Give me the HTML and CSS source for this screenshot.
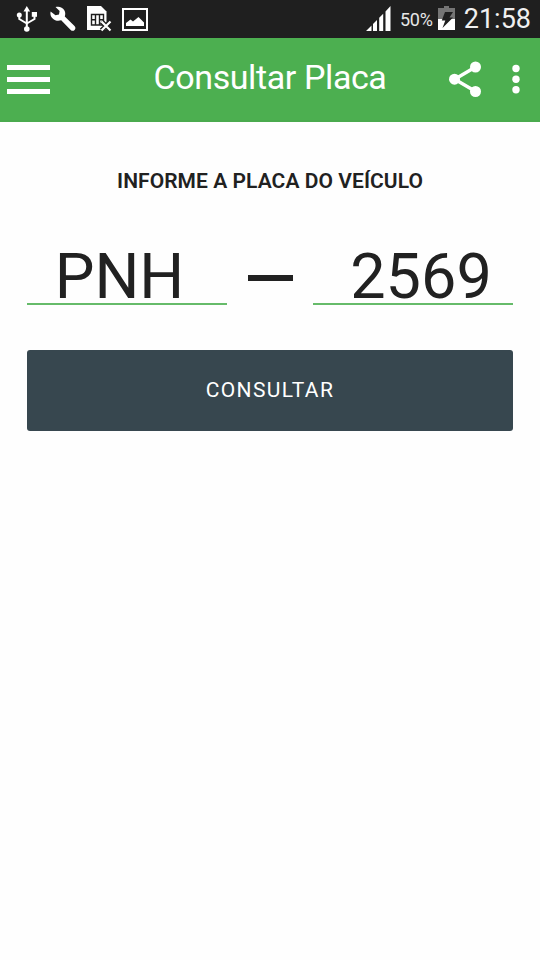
FILE: index.html
```html
<!DOCTYPE html>
<html lang="pt-BR">
<head>
    <meta charset="UTF-8">
    <meta name="viewport" content="width=device-width, initial-scale=1.0">
    <title>Consultar Placa</title>
    <link rel="stylesheet" href="styles.css">
</head>
<body>

<div class="status-bar">
    <div class="notifications">
        <svg class="usb" width="22" height="28" viewBox="0 0 22 28" fill="none" stroke="#fff" stroke-width="2">
            <path d="M10.800 4V24M3.300 10v4l7.500 4.500M18.500 9v5l-7.700 4.500"/>
            <path d="M10.800 1l3.300 5.500H7.500z" fill="#fff" stroke="none"/>
            <circle cx="10.800" cy="24" r="2.800" fill="#fff" stroke="none"/>
            <circle cx="3.300" cy="10" r="2.500" fill="#fff" stroke="none"/>
            <path d="M15.800 7h5.200v4.800h-5.200z" fill="#fff" stroke="none"/>
        </svg>
        <svg class="wrench" width="26" height="26" viewBox="0 0 26 26">
            <path d="M5.500 1C9 0 12.500 1 14.300 4.200c1.200 2 1.200 3.800.5 6.300L24.500 20c1.200 1.300 1.200 2.700.1 3.900-1.200 1.200-2.700 1.200-3.900 0L11.200 14.300C8 15.300 5 14.800 2.700 12.500.6 10.500 0 8 .6 5.500L5.500 9.300 9 8.500 9.600 5z" fill="#fff"/>
        </svg>
        <svg class="sim" width="26" height="28" viewBox="0 0 26 28">
            <path d="M0 1h14l5.500 5.500V25H0z" fill="#fff"/>
            <path d="M4.500 9.500h12v10.500h-12zM8.500 9.500V20M12.500 9.500V20M4.500 14.700h4M12.500 14.700h4" fill="none" stroke="#1f1f1f" stroke-width="1.400"/>
            <path d="M14.500 16.500l9 9M23.500 16.500l-9 9" fill="none" stroke="#1f1f1f" stroke-width="4.800"/>
            <path d="M14.500 16.500l9 9M23.500 16.500l-9 9" fill="none" stroke="#fff" stroke-width="2.200"/>
        </svg>
        <svg class="picture" width="26" height="23" viewBox="0 0 26 23">
            <path d="M1 1h24v21H1z" fill="none" stroke="#fff" stroke-width="2"/>
            <path d="M4 18v-3l4.500-3.500 2.500 2 5.500-4.500 5.500 5.500V18z" fill="#fff"/>
        </svg>
    </div>
    <div class="system">
        <svg class="signal" width="25" height="25" viewBox="0 0 25 25">
            <path d="M0 25l5.500-5.500V25zM7 18l4-4v11H7zM13.200 11.800l4-4V25h-4zM19.500 5.500L24.500 0v25h-5z" fill="#fff"/>
        </svg>
        <span class="percent">50%</span>
        <svg class="battery" width="17" height="24" viewBox="0 0 17 24">
            <path d="M6 0h5v2h6v11H0V2h6z" fill="#757575"/>
            <path d="M0 13h17v11H0z" fill="#fff"/>
            <path d="M7 6h8l-3.500 5.500H15L4.500 22l2.800-7.500H3.800z" fill="#1f1f1f"/>
        </svg>
        <span class="clock">21:58</span>
    </div>
</div>

<header>
    <button class="menu" aria-label="Menu">
        <span></span>
        <span></span>
        <span></span>
    </button>
    <h1>Consultar Placa</h1>
    <button class="share" aria-label="Compartilhar">
        <svg width="34" height="36" viewBox="0 0 34 36" fill="#fff">
            <path d="M26.500 6L5.700 18.200l21 12.300" fill="none" stroke="#fff" stroke-width="3.400"/>
            <circle cx="26.500" cy="6" r="5.500"/>
            <circle cx="5.500" cy="18.200" r="5.500"/>
            <circle cx="26.500" cy="30.500" r="5.500"/>
        </svg>
    </button>
    <button class="more" aria-label="Mais">
        <svg width="8" height="30" viewBox="0 0 8 30" fill="#fff">
            <circle cx="4" cy="4.500" r="3.700"/>
            <circle cx="4" cy="15.200" r="3.700"/>
            <circle cx="4" cy="25.700" r="3.700"/>
        </svg>
    </button>
</header>

<main>
    <h2>INFORME A PLACA DO VEÍCULO</h2>
    <form>
        <div class="plate">
            <input class="letters" type="text" value="PNH" maxlength="3" aria-label="Letras">
            <span class="dash"></span>
            <input class="numbers" type="text" value="2569" maxlength="4" aria-label="Números">
        </div>
        <button class="submit" type="button">CONSULTAR</button>
    </form>
</main>

</body>
</html>
```
FILE: styles.css
```css
* {
    box-sizing: border-box;
}
body {
    font-family: Roboto, 'Liberation Sans', sans-serif;
    margin: 0;
    padding: 0;
    min-height: 960px;
    background-color: #fefefe;
    color: #212121;
}
button {
    border: none;
    padding: 0;
    background: none;
    font-family: inherit;
    cursor: pointer;
}
svg {
    display: block;
    flex: none;
}

/* Status bar */
.status-bar {
    display: flex;
    justify-content: space-between;
    height: 38px;
    padding: 0 9px 0 16px;
    background-color: #1f1f1f;
    color: #fff;
}
.notifications, .system {
    display: flex;
    align-items: flex-start;
}
.usb {
    margin-top: 5px;
}
.wrench {
    margin: 6px 0 0 12px;
}
.sim {
    margin: 5px 0 0 11px;
}
.picture {
    margin: 8px 0 0 9px;
}
.signal {
    margin-top: 6px;
}
.percent {
    margin: 9px 0 0 9px;
    font-size: 18px;
    line-height: 22px;
    letter-spacing: -0.2px;
    color: #e6e6e6;
}
.battery {
    margin: 6px 0 0 5px;
}
.clock {
    margin: 3px 0 0 9px;
    font-size: 27px;
    line-height: 32px;
    color: #f0f0f0;
}

/* Toolbar */
header {
    display: flex;
    align-items: center;
    height: 84px;
    padding: 0 20px 0 7px;
    background-color: #4caf50;
    border-bottom: 2px solid #4aaa4e;
    color: #fff;
}
.menu {
    display: flex;
    flex-direction: column;
    gap: 7px;
    width: 43px;
}
.menu span {
    height: 5px;
    background-color: #fff;
}
h1 {
    flex: 1;
    margin: 0 0 4px;
    padding-left: 41px;
    font-size: 34px;
    font-weight: 400;
    line-height: 40px;
    letter-spacing: -0.4px;
    text-align: center;
}
.share {
    margin-right: 29px;
}

/* Form */
main {
    padding: 46px 27px 0;
}
h2 {
    margin: 0;
    font-size: 21px;
    font-weight: 600;
    line-height: 26px;
    letter-spacing: 0.06px;
    text-align: center;
    white-space: nowrap;
}
.plate {
    display: flex;
    justify-content: space-between;
    align-items: center;
    margin: 44px 0 45px;
}
.plate input {
    width: 200px;
    height: 67px;
    padding: 12px 0 0;
    border: none;
    border-bottom: 2px solid #66bb6a;
    border-radius: 0;
    outline: none;
    background: none;
    color: #212121;
    font-family: inherit;
    font-size: 63px;
    line-height: 53px;
    text-align: center;
}
.plate .letters {
    padding-right: 15px;
}
.plate .numbers {
    padding-left: 16px;
}
.dash {
    width: 45px;
    height: 6px;
    margin-top: 12px;
    background-color: #212121;
}
.submit {
    display: block;
    width: 100%;
    height: 81px;
    padding-bottom: 2px;
    border-radius: 3px;
    background-color: #37474f;
    color: #fff;
    font-size: 21px;
    letter-spacing: 1.4px;
}
```
